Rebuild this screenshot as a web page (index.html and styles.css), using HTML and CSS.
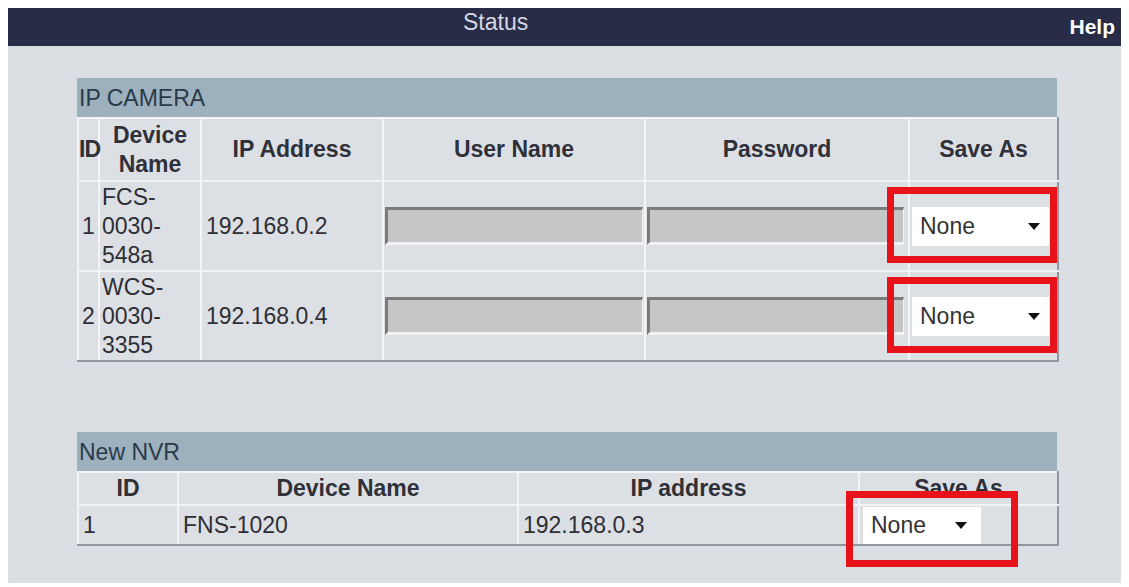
FILE: index.html
```html
<!DOCTYPE html>
<html lang="en">
<head>
<meta charset="utf-8">
<title>Status</title>
<link rel="stylesheet" href="styles.css">
</head>
<body>
<header class="topbar">
  <span class="title">Status</span>
  <span class="help">Help</span>
</header>
<main class="panel">
  <section class="group cam">
    <div class="group-title">IP CAMERA</div>
    <table class="grid">
      <colgroup>
        <col class="c-id"><col class="c-dev"><col class="c-ip"><col class="c-user"><col class="c-pass"><col class="c-save">
      </colgroup>
      <thead>
        <tr><th class="id-h">ID</th><th>Device<br>Name</th><th>IP Address</th><th>User Name</th><th>Password</th><th>Save As</th></tr>
      </thead>
      <tbody>
        <tr>
          <td class="id">1</td>
          <td class="dev">FCS-<br>0030-<br>548a</td>
          <td class="ip">192.168.0.2</td>
          <td class="inp"><input class="field" type="text" disabled></td>
          <td class="inp pass"><input class="field" type="text" disabled></td>
          <td class="save"><div class="select"><span>None</span><svg class="caret" viewBox="0 0 12 7" width="12" height="7"><path d="M0 0H12L6 7Z"/></svg><span class="mark mark-cam"></span></div></td>
        </tr>
        <tr>
          <td class="id">2</td>
          <td class="dev">WCS-<br>0030-<br>3355</td>
          <td class="ip">192.168.0.4</td>
          <td class="inp"><input class="field" type="text" disabled></td>
          <td class="inp pass"><input class="field" type="text" disabled></td>
          <td class="save"><div class="select"><span>None</span><svg class="caret" viewBox="0 0 12 7" width="12" height="7"><path d="M0 0H12L6 7Z"/></svg><span class="mark mark-cam"></span></div></td>
        </tr>
      </tbody>
    </table>
  </section>

  <section class="group nvr">
    <div class="group-title">New NVR</div>
    <table class="grid">
      <colgroup>
        <col class="n-id"><col class="n-dev"><col class="n-ip"><col class="n-save">
      </colgroup>
      <thead>
        <tr><th>ID</th><th>Device Name</th><th>IP address</th><th>Save As</th></tr>
      </thead>
      <tbody>
        <tr>
          <td class="nid">1</td>
          <td class="ndev">FNS-1020</td>
          <td class="nip">192.168.0.3</td>
          <td class="save nsave"><div class="select small"><span>None</span><svg class="caret" viewBox="0 0 12 7" width="12" height="7"><path d="M0 0H12L6 7Z"/></svg><span class="mark mark-nvr"></span></div></td>
        </tr>
      </tbody>
    </table>
  </section>
</main>
</body>
</html>
```

FILE: styles.css
```css
* { box-sizing: border-box; }

body {
  margin: 0;
  background: #ffffff;
  font-family: "Liberation Sans", Arial, Helvetica, sans-serif;
  color: #2e2e34;
}

.topbar {
  margin: 8px 8px 0 8px;
  height: 38px;
  background: #282c46;
  display: flex;
  align-items: flex-start;
}

.title {
  padding-left: 455px;
  font-size: 23px;
  line-height: 29px;
  color: #d4d7e4;
}

.help {
  margin-left: auto;
  align-self: center;
  padding-right: 6px;
  font-size: 21px;
  font-weight: bold;
  color: #ffffff;
}

.panel {
  display: block;
  margin: 0 8px;
  height: 537px;
  background: #dbdfe4;
  padding: 32px 0 0 69px;
}

.group { width: 980px; }
.group + .group { margin-top: 70px; }

.group-title {
  height: 39px;
  line-height: 41px;
  background: #9cb0bd;
  color: #2a3a4a;
  font-size: 23px;
  padding-left: 2px;
}

.grid {
  width: 980px;
  table-layout: fixed;
  border-collapse: collapse;
  font-size: 23px;
  line-height: 29px;
  background: #dce0e5;
}

.grid th, .grid td {
  border: 2px solid #f2f4f6;
  padding: 0 3px;
  vertical-align: middle;
}

.grid th:last-child, .grid td:last-child { border-right-color: #8e969e; }
.grid tbody tr:last-child td { border-bottom-color: #8e969e; }

.grid th {
  font-weight: bold;
  color: #2f3038;
  text-align: center;
}

.c-id { width: 21px; }
.c-dev { width: 102px; }
.c-ip { width: 182px; }
.c-user { width: 262px; }
.c-pass { width: 264px; }
.c-save { width: 149px; }

.cam thead th { height: 63px; }
.cam tbody tr { height: 90px; }

.grid th.id-h { padding: 0; letter-spacing: -1px; text-align: left; }
.grid td.id { padding: 0 0 0 3px; }
.grid td.dev { padding: 0 2px; }
.grid td.ip { padding: 0 4px; }

.grid td.inp { padding: 0 1px; }
.grid td.pass { padding: 0 4px 0 1px; }

.field {
  display: block;
  width: 100%;
  height: 38px;
  margin: 0;
  padding: 0;
  background: #c6c6c6;
  border-style: solid;
  border-width: 3px 1px 3px 3px;
  border-color: #7b7b7b #f1f3f5 #f1f3f5 #7b7b7b;
  border-radius: 0;
  font: inherit;
}

.grid td.save { padding: 0 2px; }

.select {
  position: relative;
  width: 137px;
  height: 39px;
  background: #ffffff;
  display: flex;
  align-items: center;
  justify-content: space-between;
  padding: 0 9px 0 8px;
  color: #333333;
  font-size: 23px;
}

.select.small {
  width: 118px;
  height: 37px;
  padding: 0 14px 0 8px;
}

.caret { display: block; fill: #111111; }

.mark {
  position: absolute;
  border: 7px solid #e8121b;
  pointer-events: none;
}

.mark-cam { left: -25px; top: -20px; width: 170px; height: 76px; }
.mark-nvr { left: -17px; top: -16px; width: 172px; height: 76px; }

.n-id { width: 100px; }
.n-dev { width: 340px; }
.n-ip { width: 341px; }
.n-save { width: 199px; }

.nvr thead th { height: 33px; }
.nvr tbody tr { height: 40px; }

.grid td.nid { padding: 0 4px; }
.grid td.ndev { padding: 0 4px; }
.grid td.nip { padding: 0 4px; }
.grid td.nsave { padding: 0 3px; }
```
